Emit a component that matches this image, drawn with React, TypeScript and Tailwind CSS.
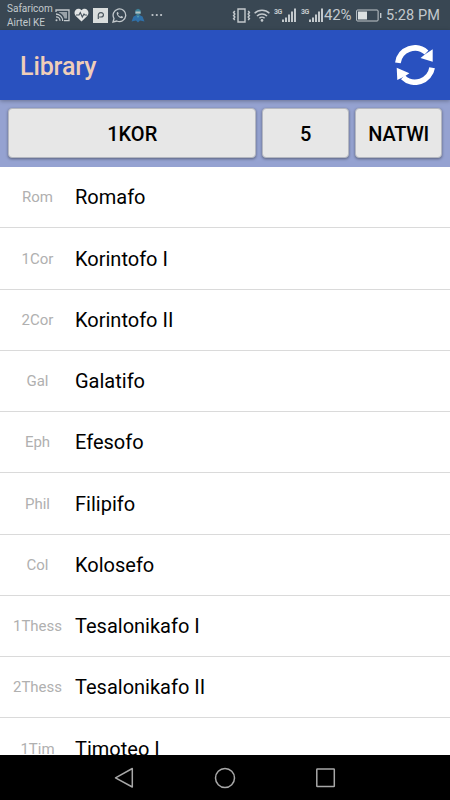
import React from "react";

const books = [
  ["Rom", "Romafo"],
  ["1Cor", "Korintofo I"],
  ["2Cor", "Korintofo II"],
  ["Gal", "Galatifo"],
  ["Eph", "Efesofo"],
  ["Phil", "Filipifo"],
  ["Col", "Kolosefo"],
  ["1Thess", "Tesalonikafo I"],
  ["2Thess", "Tesalonikafo II"],
  ["1Tim", "Timoteo I"],
];

function Signal() {
  return (
    <div className="flex h-[15px] w-[23px] shrink-0 items-start">
      <span className="w-[8px] text-[7px] leading-[8px] font-bold tracking-[-0.5px]">3G</span>
      <svg className="h-[15px] w-[15px]" viewBox="0 0 15 15" fill="currentColor">
        <path d="M0 11.5h2V14H0zM3 9.5h2V14H3zM6 6.5h2V14H6zM9 3.5h2V14H9zM12 .5h2V14h-2z" />
      </svg>
    </div>
  );
}

function StatusBar() {
  return (
    <div className="flex h-[30px] shrink-0 items-center bg-[#394753] text-[#c3c9cd]">
      <div className="ml-[7px] w-[48px] whitespace-nowrap pt-[1px] text-[10px] leading-[13.5px]">
        <div>Safaricom</div>
        <div>Airtel KE</div>
      </div>
      <svg className="h-[13px] w-[15px]" viewBox="0 0 15 13" fill="none" stroke="currentColor" strokeWidth="1.3">
        <path d="M1 3V1h13v10.7H9M1 5a7 7 0 0 1 6.7 7M1 7.8a4 4 0 0 1 4 4" />
        <path d="M4 3h8v6.5H9.500C8.500 6.5 7 4.500 4 3.500z" fill="currentColor" stroke="none" opacity=".7" />
        <circle cx="1.5" cy="11.2" r="1" fill="currentColor" stroke="none" />
      </svg>
      <svg className="ml-[4px] h-[14px] w-[15px]" viewBox="0 0 15 14">
        <path d="M7.5 13.5 2 8.2C-2.2 3.6 3.5-2 7.5 2.3 11.5-2 17.2 3.6 13 8.2z" fill="#e1e4e5" />
        <path d="M2 7h3l1.3-2.5 2 4.5 1.7-3 .8 1H13" fill="none" stroke="#45525d" strokeWidth="1.1" />
      </svg>
      <svg className="ml-[4px] h-[15px] w-[15px]" viewBox="0 0 15 15">
        <path d="M0 0h15v15H0z" fill="#d9dddd" />
        <path d="M5.300 11V8.500m0 0C5 6 6 4.700 8 4.700c3.500 0 3 4.300 0 4.300H6.200" fill="none" stroke="#4a565e" strokeWidth="1.2" />
      </svg>
      <svg className="ml-[4px] h-[15px] w-[15px]" viewBox="0 0 15 15" fill="none" stroke="currentColor">
        <path d="m1 14 1-3.5A6.3 6.3 0 1 1 4.8 13z" strokeWidth="1.3" />
        <path d="M5.2 4c-2 2 2.4 7.2 5.2 6.1.8-.6.8-1.3.2-1.6l-1.4-.6-.8.9C7.2 8.3 6.5 7.5 6 6.6l.7-.8L6.1 4.2z" fill="currentColor" stroke="none" />
      </svg>
      <svg className="ml-[4px] h-[15px] w-[14px]" viewBox="0 0 14 15">
        <path d="M4 5.500 4.500 2 7 .7 9.500 2l.5 3.500L7 7.500z" fill="#3e8399" />
        <path d="M4.500 3.500h5V5.500h-5z" fill="#b4c0c1" />
        <path d="M5.500 7 2.500 8.500.5 13.500l4.500-1 2 2 2-2 4.500 1-2-5L8.500 7 7 8z" fill="#2f70a8" />
        <path d="M5.500 7.500 7 10l1.500-2.500z" fill="#4e9ab0" />
      </svg>
      <svg className="ml-[6px] h-[4px] w-[12px]" viewBox="0 0 12 4" fill="currentColor">
        <circle cx="1.5" cy="2" r="1.1" /><circle cx="5.8" cy="2" r="1.1" /><circle cx="10.1" cy="2" r="1.1" />
      </svg>
      <svg className="ml-auto h-[15px] w-[19px] shrink-0" viewBox="0 0 19 15" fill="none" stroke="currentColor">
        <path d="M6 1h7v13H6z" strokeWidth="1.4" />
        <path d="m2.8 3-1.2 1.5 1.2 1.5-1.2 1.5 1.2 1.5-1.2 1.5 1.2 1.5M16.2 3l1.2 1.5-1.2 1.5 1.2 1.5-1.2 1.5 1.2 1.5-1.2 1.5" strokeWidth="1.5" />
      </svg>
      <svg className="ml-[3px] h-[13px] w-[16px] shrink-0" viewBox="0 0 16 13" fill="none" stroke="currentColor" strokeWidth="1.5">
        <path d="M.6 4.3a10.5 10.5 0 0 1 14.8 0M3 7a7 7 0 0 1 10 0M5.4 9.3a3.7 3.7 0 0 1 5.2 0" />
        <circle cx="8" cy="11.4" r="1.3" fill="currentColor" stroke="none" />
      </svg>
      <div className="ml-[4px] flex"><Signal /></div>
      <div className="ml-[4px] flex"><Signal /></div>
      <span className="w-[28px] whitespace-nowrap text-[15px] tracking-[-0.2px]">42%</span>
      <svg className="ml-[4px] h-[13px] w-[26px] shrink-0" viewBox="0 0 26 13">
        <rect x=".6" y="1" width="21.5" height="11" rx="1" fill="none" stroke="currentColor" strokeWidth="1" />
        <path d="M2 2.5h9v8H2z" fill="#dce0e1" />
        <path d="M24 4h1.4v5H24z" fill="currentColor" />
      </svg>
      <span className="mr-[9px] ml-[4px] w-[55px] whitespace-nowrap pt-[2px] text-[14.5px] tracking-[0.1px]">5:28 PM</span>
    </div>
  );
}

const pickerButton =
  "flex h-[50px] items-center justify-center rounded-[4px] border border-[#b4b7c0] bg-[#e7e7e7] pt-[2px] text-[20px] font-medium text-black shadow-[0_1px_3px_rgba(0,0,0,0.4)]";

export default function App() {
  return (
    <div className="flex h-[800px] w-[450px] flex-col overflow-hidden bg-white font-['Roboto',sans-serif]">
      <StatusBar />
      <header className="z-10 flex h-[70px] shrink-0 items-center justify-between bg-[#2951bf] pr-[15px] pl-[20px] shadow-[0_1px_4px_rgba(0,0,0,0.3)]">
        <h1 className="pt-[4px] text-[25px] leading-[30px] font-medium tracking-[-0.1px] text-[#efceb9]">Library</h1>
        <svg className="h-[40px] w-[40px]" viewBox="0 0 40 40" fill="none">
          <path d="M2.9 17.8A17.2 17.2 0 0 1 31.5 7.5" stroke="#fff" strokeWidth="5.7" />
          <path d="M37.1 22.8A17.2 17.2 0 0 1 8 32.2" stroke="#fff" strokeWidth="5.7" />
          <path d="M37.7 4.3v12.5L25.5 13l5-4zM1.7 22.7l12.7 5.5-5 3.3L2.3 35z" fill="#fff" />
        </svg>
      </header>
      <div className="flex h-[67px] shrink-0 gap-[6px] bg-[#95a2d1] px-[8px] pt-[8px]">
        <button className={`${pickerButton} w-[249px]`}>1KOR</button>
        <button className={`${pickerButton} w-[87px]`}>5</button>
        <button className={`${pickerButton} w-[87px] tracking-[-0.3px]`}>NATWI</button>
      </div>
      <main className="min-h-0 flex-1 overflow-hidden">
        {books.map(([abbr, name]) => (
          <div key={abbr} className="flex h-[61.25px] items-center border-b border-[#dadada]">
            <span className="w-[75px] pt-px text-center text-[15px] text-[#b0b0b0]">{abbr}</span>
            <span className="pt-[0.5px] text-[20px] text-black">{name}</span>
          </div>
        ))}
      </main>
      <nav className="flex h-[45px] shrink-0 items-center justify-center gap-[80px] bg-black pr-[1px] text-[#a8a8a8]">
        <svg className="h-[22px] w-[20px]" viewBox="0 0 20 22" fill="none" stroke="currentColor" strokeWidth="1.5">
          <path d="M18.3 1.5V20L1.5 10.8z" strokeLinejoin="round" />
        </svg>
        <svg className="h-[22px] w-[22px]" viewBox="0 0 22 22" fill="none" stroke="currentColor" strokeWidth="1.5">
          <circle cx="11" cy="11" r="9.5" />
        </svg>
        <svg className="h-[20px] w-[20px]" viewBox="0 0 20 20" fill="none" stroke="currentColor" strokeWidth="1.5">
          <rect x=".8" y="1" width="17.5" height="17.5" rx=".6" />
        </svg>
      </nav>
    </div>
  );
}
